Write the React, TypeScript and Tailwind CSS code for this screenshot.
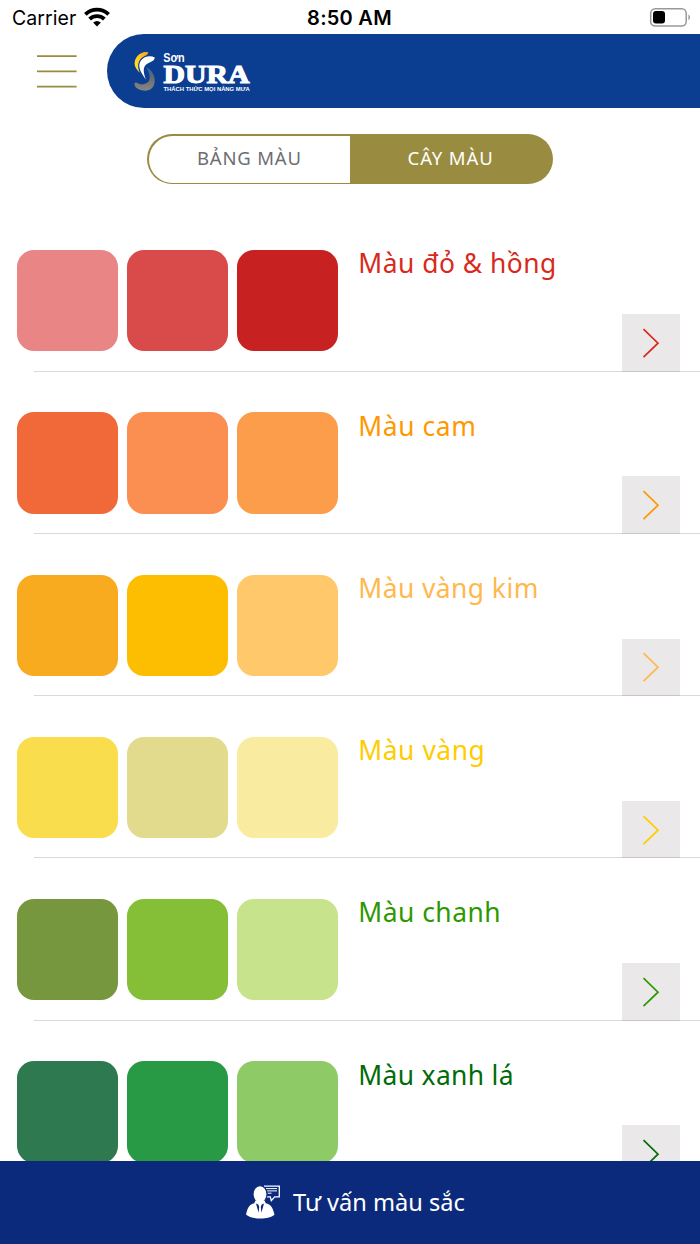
type ColorRow = { title: string; color: string; spacing: string; swatches: string[] };

const rows: ColorRow[] = [
  { title: "Màu đỏ & hồng", color: "text-[#d9291c]", spacing: "tracking-[0.5px]", swatches: ["bg-[#e98585]", "bg-[#d94a4a]", "bg-[#c72121]"] },
  { title: "Màu cam", color: "text-[#ff9800]", spacing: "tracking-[0.6px]", swatches: ["bg-[#f16938]", "bg-[#fb8f51]", "bg-[#fc9d4b]"] },
  { title: "Màu vàng kim", color: "text-[#ffb84d]", spacing: "tracking-[0.45px]", swatches: ["bg-[#f9ab1f]", "bg-[#fdbe02]", "bg-[#ffc96b]"] },
  { title: "Màu vàng", color: "text-[#ffcc00]", spacing: "tracking-[0.55px]", swatches: ["bg-[#fadd4d]", "bg-[#e2da8d]", "bg-[#f9eb9f]"] },
  { title: "Màu chanh", color: "text-[#2d9900]", spacing: "tracking-[0.5px]", swatches: ["bg-[#76973d]", "bg-[#85bf38]", "bg-[#c7e38b]"] },
  { title: "Màu xanh lá", color: "text-[#006b08]", spacing: "tracking-[0.35px]", swatches: ["bg-[#2e7950]", "bg-[#289a46]", "bg-[#8ecb66]"] },
];

function StatusBar() {
  return (
    <div className="grid h-[34px] shrink-0 grid-cols-3 items-center pr-[9px] pl-3 font-['Inter',sans-serif] text-black">
      <div className="flex items-center gap-[8px]">
        <span className="pt-[2px] text-[19.5px] leading-6 tracking-[0.05px]">Carrier</span>
        <svg className="-mt-[1px]" width="26" height="20" viewBox="0 0 26 20" fill="none" stroke="#000" strokeWidth="3.9">
          <path d="M1.4 7.3C8 1 18 1 24.6 7.3" />
          <path d="M5.6 12C9.8 8.1 16.2 8.1 20.4 12" />
          <path d="M13 19.5 9.1 15.5Q13 12.3 16.9 15.5Z" fill="#000" stroke="none" />
        </svg>
      </div>
      <span className="-ml-[4px] pt-[2px] text-center text-[20px] leading-6 font-semibold tracking-[0.25px] whitespace-nowrap">8:50 AM</span>
      <svg className="justify-self-end" width="42" height="20" viewBox="0 0 42 20">
        <rect x="1.7" y="1.7" width="35.5" height="17.4" rx="4.5" fill="none" stroke="#999" strokeWidth="1.5" />
        <rect x="4" y="4" width="12" height="12.5" rx="3" />
        <path d="M39.5 7.2q2.8 3.2 0 6.4Z" fill="#888" />
      </svg>
    </div>
  );
}

function Logo() {
  return (
    <svg className="block" width="120" height="44" viewBox="132 49 120 44">
      <defs>
        <linearGradient id="sun" x1="0" y1="1" x2="1" y2="0">
          <stop offset="0" stopColor="#fff12b" />
          <stop offset="0.55" stopColor="#ffc81e" />
          <stop offset="1" stopColor="#f49a25" />
        </linearGradient>
        <linearGradient id="wave" x1="0" y1="0" x2="0" y2="1">
          <stop offset="0" stopColor="#1e6cae" />
          <stop offset="0.4" stopColor="#5d6a78" />
          <stop offset="0.7" stopColor="#77787a" />
          <stop offset="1" stopColor="#858585" />
        </linearGradient>
      </defs>
      <path d="M148.3 52.4C144.5 51 138.500 53 135.800 58.500c-2.400 4.900-1.100 9.600 4.200 14.200-2.800-5.400-2.200-9.800.4-13.500 2.500-3.400 7.600-3.600 7.900-6.800Z" fill="url(#sun)" />
      <path d="M154.8 57.4c-4.900-2.200-10.900-.9-13.800 3.100-3.800 5.300-.9 11.200 5 19.300-2.300-6.600-3.500-11.400-.3-14.900 2.900-3.200 8.600-2.900 9.100-7.500Z" fill="#fff" />
      <path d="M146 67c6 3 9.200 8.500 8.700 14.800-.5 5.300-4 8.900-9.400 8.900-5.200 0-10-2.200-10.900-6.200-.4-2.400 2-2.600 3.800-1.200 2.200 1.800 6.500 1.300 9.200-.7 3.600-2.700 2.700-9.300-1.400-15.600Z" fill="url(#wave)" />
      <text x="163.2" y="61.6" fill="#fff" fontFamily="Liberation Sans, sans-serif" fontWeight="bold" fontSize="13" textLength="21.5" lengthAdjust="spacingAndGlyphs">Sơn</text>
      <text x="163.4" y="82.6" fill="#fff" stroke="#fff" strokeWidth="1.1" fontFamily="Liberation Serif, serif" fontWeight="bold" fontSize="26" textLength="86" lengthAdjust="spacingAndGlyphs">DURA</text>
      <text x="163.5" y="90.7" fill="#fff" fontFamily="Liberation Sans, sans-serif" fontWeight="bold" fontSize="5.5" textLength="86.3" lengthAdjust="spacingAndGlyphs">THÁCH THỨC MỌI NẮNG MƯA</text>
    </svg>
  );
}

function Header() {
  return (
    <header className="flex h-[74.3px] shrink-0">
      <button aria-label="Menu" className="flex w-[107px] items-start pt-[20px] pl-[37px]">
        <svg className="block" width="40" height="36" viewBox="0 0 40 36" stroke="#998c40" strokeWidth="1.8">
          <path d="M0 2.2H39.6M0 17.4H39.6M0 32.7H39.6" />
        </svg>
      </button>
      <div className="flex-1 rounded-l-full bg-[#0b3d91] pt-[15px] pl-[25px]">
        <Logo />
      </div>
    </header>
  );
}

function Tabs() {
  return (
    <div className="mx-auto mt-[25.5px] flex h-[50.7px] w-[406px] shrink-0 rounded-full bg-[#998c40] p-[1.8px] font-['Noto_Sans',sans-serif] text-[18.5px]">
      <button className="flex-1 rounded-l-full bg-white pb-[2px] tracking-[0.8px] text-[#6d6d72]">BẢNG MÀU</button>
      <button className="flex-1 pb-[2px] tracking-[0.9px] text-white">CÂY MÀU</button>
    </div>
  );
}

function Row({ row }: { row: ColorRow }) {
  return (
    <li className="flex h-[162.25px] shrink-0 flex-col">
      <div className="flex flex-1 pl-[17px]">
        <div className="flex gap-[8.7px] pt-[40.7px]">
          {row.swatches.map((s) => (
            <span key={s} className={`size-[101.3px] rounded-[17px] ${s}`} />
          ))}
        </div>
        <div className={`flex flex-1 justify-between pr-[20.5px] pl-[20px] ${row.color}`}>
          <h2 className={`pt-[36px] text-[26.4px] leading-[36px] whitespace-nowrap ${row.spacing}`}>{row.title}</h2>
          <span className="flex size-[57.5px] items-center justify-center self-end bg-[#eae8e9]">
            <svg width="18" height="30" viewBox="0 0 18 30" fill="none" stroke="currentColor" strokeWidth="1.7">
              <path d="M1.5 1.2 16 15.2 1.5 29.2" />
            </svg>
          </span>
        </div>
      </div>
      <div className="-mt-px ml-[34px] h-px shrink-0 bg-black/15" />
    </li>
  );
}

function AdvisorIcon() {
  return (
    <svg width="36" height="34" viewBox="0 0 36 34">
      <path d="M18 1.200H33.300v10.600h-4.600l-3.400 3.800-1-3.800h-4" fill="none" stroke="#fff" strokeWidth="1.3" />
      <path d="M20 3.600h11M21 5.900h10M21.500 8.200h4" stroke="#fff" strokeWidth="1" />
      <ellipse cx="14" cy="9.300" rx="7" ry="8.600" fill="#fff" stroke="#0c2a7c" strokeWidth="1.1" />
      <path d="M9.500 15.500h9l1.200 2.700c5.200 1.600 6.600 3 8.800 11.300-4.500 5.300-23.500 5.300-28.500 0C2 21.200 3.500 19.800 8.300 18.200Z" fill="#fff" />
      <path d="m10 18.400 2.600 9.400.6-6-.9-2.400Zm8 0-2.600 9.400-.6-6 .9-2.400Z" fill="#0c2a7c" />
    </svg>
  );
}

export default function App() {
  return (
    <main className="flex h-[1244px] w-[700px] flex-col overflow-hidden bg-white font-['Noto_Sans',sans-serif]">
      <StatusBar />
      <Header />
      <Tabs />
      <ul className="mt-[24.9px] flex min-h-0 flex-1 flex-col overflow-hidden">
        {rows.map((row) => (
          <Row key={row.title} row={row} />
        ))}
      </ul>
      <footer className="flex h-[83px] shrink-0 items-center gap-[11px] bg-[#0c2a7c] pb-[2px] pl-[246px] text-white">
        <AdvisorIcon />
        <span className="text-[23.6px] leading-9 whitespace-nowrap">Tư vấn màu sắc</span>
      </footer>
    </main>
  );
}
